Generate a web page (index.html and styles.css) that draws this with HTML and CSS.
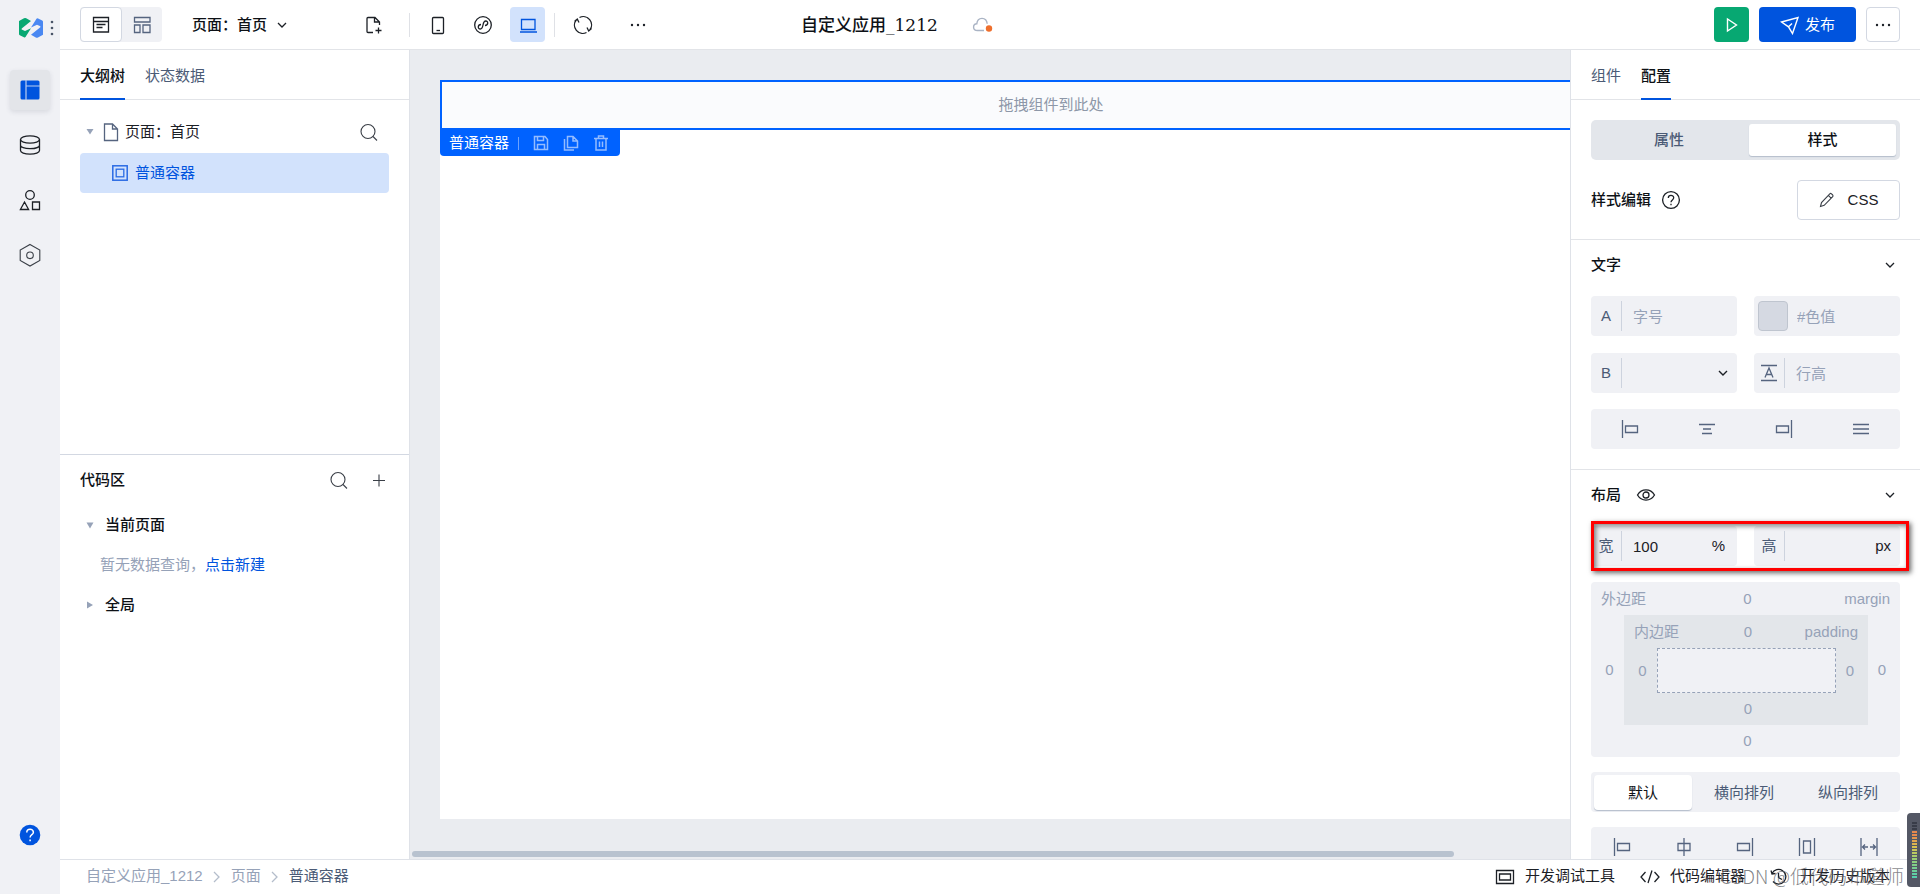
FILE: index.html
```html
<!DOCTYPE html>
<html lang="zh-CN">
<head>
<meta charset="utf-8">
<title>自定义应用_1212</title>
<link rel="stylesheet" href="styles.css">
</head>
<body>
<div class="app">
  <nav class="rail" aria-label="主导航">
    <div class="brand">
      <svg class="logo" width="24" height="20" viewBox="0 0 24 20"><path fill="#07a872" d="M0 3 5 .3q1.200-.5 2.200 0L12 3 3 10.200q-1 1 .2 1.600L6 13l6-2.800L6.500 19q-.6.800-1.600.200L.8 17.300Q0 17 0 16z"/><path fill="#4a88f2" d="M24 16.800 19 19.600q-1.200.5-2.200 0L12 16.800l9-7.200q1-1-.2-1.600L18 6.800 12 9.600 17.500.8q.6-.8 1.600-.2l4.100 2Q24 3 24 3.800z"/></svg>
      <svg width="4" height="18" viewBox="0 0 4 18" fill="#4a5568"><circle cx="2" cy="3" r="1.300"/><circle cx="2" cy="9" r="1.300"/><circle cx="2" cy="15" r="1.300"/></svg>
    </div>
    <button class="rail-item active" aria-label="页面">
      <svg width="20" height="20" viewBox="0 0 20 20"><rect x=".5" y=".5" width="19" height="19" rx="1.500" fill="#0054de"/><path d="M6 0v20M6 6h14" stroke="#b9cdf0" stroke-width="1.200"/></svg>
    </button>
    <button class="rail-item" aria-label="数据">
      <svg class="ic" width="22" height="20" viewBox="0 0 22 20"><ellipse cx="11" cy="4.500" rx="9.500" ry="3.700"/><path d="M1.500 4.500v11c0 2 4 3.700 9.500 3.700s9.500-1.700 9.500-3.700v-11M1.500 10.200c0 2 4 3.500 9.500 3.500s9.500-1.500 9.500-3.500"/></svg>
    </button>
    <button class="rail-item" aria-label="组件库">
      <svg class="ic" width="22" height="22" viewBox="0 0 22 22"><circle cx="11" cy="6" r="4.300"/><path d="M5.500 13 9.600 20.500H1.400zM13.500 13h7v7.500h-7z"/></svg>
    </button>
    <button class="rail-item" aria-label="设置">
      <svg class="ic thin" width="22" height="24" viewBox="0 0 22 24"><path d="M11 1.500 20.800 7v10.500L11 23 1.200 17.500V7z"/><circle cx="11" cy="12.300" r="3.300"/></svg>
    </button>
    <button class="rail-help" aria-label="帮助">
      <svg width="22" height="22" viewBox="0 0 22 22"><circle cx="11" cy="11" r="10.300" fill="#0054de"/><path d="M7.800 8.500c0-4.300 6.600-4 6.600-.3 0 2.600-3.300 2.400-3.300 5.300M11.100 15.500v1.700" fill="none" stroke="#fff" stroke-width="1.500"/></svg>
    </button>
  </nav>

  <div class="shell">
    <header class="topbar">
      <div class="view-toggle">
        <button class="on" aria-label="列表视图"><svg class="ic" width="18" height="18" viewBox="0 0 18 18"><path d="M1.500 1.500h15v14.500h-15zM1.500 5.500h15M4.500 8.500h9M4.500 11.500h6"/></svg></button>
        <button aria-label="布局视图"><svg class="ic slate" width="18" height="18" viewBox="0 0 18 18"><path d="M1.500 1.500h15.500v4.500h-15.500zM1.500 9h5.500v7.500h-5.500zM10 9h7v7.500h-7z"/></svg></button>
      </div>
      <button class="page-pick">页面：首页<svg class="ic" width="12" height="12" viewBox="0 0 12 12"><path d="m2 4 4 4 4-4"/></svg></button>
      <button class="tool new-page" aria-label="新建页面"><svg class="ic" width="20" height="20" viewBox="0 0 20 20"><path d="M9 17.500H4q-1 0-1-1v-13q0-1 1-1h7l4.500 4.500v3M10.500 2.500v4.500h5M14.500 12.500v6M11.500 15.500h6"/></svg></button>
      <span class="sep"></span>
      <div class="devices">
        <button class="tool" aria-label="手机"><svg class="ic" width="20" height="20" viewBox="0 0 20 20"><rect x="4.500" y="2.500" width="11" height="16" rx="1"/><path d="M8.500 15.500h3.500"/></svg></button>
        <button class="tool" aria-label="小程序"><svg class="ic" width="20" height="20" viewBox="0 0 20 20"><circle cx="10" cy="10" r="8.300"/><path d="M8 9.500C4.500 9.800 4.500 14 7.300 14c3.900 0 1.500-8 5.400-8 2.800 0 2.800 4.200-.7 4.500"/></svg></button>
        <button class="tool on" aria-label="电脑"><svg class="ic blue" width="20" height="20" viewBox="0 0 20 20"><path d="M3.500 4.500h13.500v10H3.500zM2 17h17"/></svg></button>
      </div>
      <span class="sep"></span>
      <button class="tool refresh" aria-label="刷新"><svg class="ic" width="20" height="20" viewBox="0 0 20 20"><path d="M6.500 2.500A8.300 8.300 0 0 1 16.800 15M13.500 17.500A8.300 8.300 0 0 1 3.200 5M1.500 6.500 4.300 4 6 7.500M18.500 13.500 15.700 16 14 12.500"/></svg></button>
      <button class="tool" aria-label="更多"><svg width="20" height="20" viewBox="0 0 20 20" fill="#1c2026"><circle cx="4" cy="10" r="1.200"/><circle cx="10" cy="10" r="1.200"/><circle cx="16" cy="10" r="1.200"/></svg></button>
      <h1 class="app-title">自定义应用_1212</h1>
      <svg width="22" height="18" viewBox="0 0 22 18"><path d="M12 14.500H5.500C.3 14.500.5 8 4.800 7.800 5.500.5 14.500.5 15.200 7.800" fill="none" stroke="#a9b3c4" stroke-width="1.400"/><circle cx="17" cy="12.500" r="3.200" fill="#ee6f2d"/></svg>
      <div class="actions">
        <button class="run" aria-label="预览"><svg width="14" height="16" viewBox="0 0 14 16"><path d="M2.500 2v12l9-6z" fill="none" stroke="#fff" stroke-width="1.400"/></svg></button>
        <button class="publish"><svg width="20" height="20" viewBox="0 0 20 20"><path d="M1.500 7 18 2.500 12.500 18.500 8.500 11.800zM8.500 11.800l3.500-3.300" fill="none" stroke="#fff" stroke-width="1.400"/></svg>发布</button>
        <button class="more" aria-label="更多操作"><svg width="20" height="20" viewBox="0 0 20 20" fill="#1c2026"><circle cx="4" cy="10" r="1.200"/><circle cx="10" cy="10" r="1.200"/><circle cx="16" cy="10" r="1.200"/></svg></button>
      </div>
    </header>

    <div class="work">
      <aside class="side">
        <section class="outline">
          <div class="tabs"><button class="tab on">大纲树</button><button class="tab">状态数据</button></div>
          <div class="tree">
            <div class="tree-row">
              <svg width="10" height="8" viewBox="0 0 10 8"><path d="M1.500 1h7L5 6.500z" fill="#96a2b8"/></svg>
              <svg class="ic slate doc" width="18" height="20" viewBox="0 0 18 20"><path d="M3 2h7.500L15.500 7v11.500H2.500V2zM10.500 2v5h5"/></svg>
              <span class="grow">页面：首页</span>
              <button class="bare" aria-label="搜索"><svg class="ic thin" width="20" height="20" viewBox="0 0 20 20"><circle cx="9" cy="9.500" r="7"/><path d="m14 14.500 4 4"/></svg></button>
            </div>
            <div class="tree-row picked">
              <svg width="16" height="16" viewBox="0 0 16 16"><rect x=".8" y=".8" width="14.400" height="14.400" fill="none" stroke="#2a6be4" stroke-width="1.500"/><rect x="4.200" y="4.200" width="7.600" height="7.600" fill="none" stroke="#2a6be4" stroke-width="1.300"/></svg>
              <span>普通容器</span>
            </div>
          </div>
        </section>
        <section class="code">
          <div class="code-head">
            <h2 class="grow">代码区</h2>
            <button class="bare" aria-label="搜索代码"><svg class="ic thin" width="20" height="20" viewBox="0 0 20 20"><circle cx="9" cy="9.500" r="7"/><path d="m14 14.500 4 4"/></svg></button>
            <button class="bare" aria-label="新建"><svg class="ic thin" width="20" height="20" viewBox="0 0 20 20"><path d="M10 4.500v12M4 10.500h12"/></svg></button>
          </div>
          <div class="code-row"><svg width="10" height="8" viewBox="0 0 10 8"><path d="M1.500 1.500h7L5 7.500z" fill="#96a2b8"/></svg>当前页面</div>
          <div class="code-row empty">暂无数据查询，<a href="#new">点击新建</a></div>
          <div class="code-row"><svg width="10" height="10" viewBox="0 0 10 10"><path d="M2 1.500v7L8 5z" fill="#96a2b8"/></svg>全局</div>
        </section>
      </aside>

      <main class="stage">
        <div class="page">
          <div class="container">拖拽组件到此处</div>
          <div class="node-bar">
            <span>普通容器</span>
            <i class="node-sep"></i>
            <button aria-label="保存"><svg width="16" height="16" viewBox="0 0 16 16"><path d="M1.500 1.500h10.500L14.500 4.500v10h-13zM4.500 1.500v4h6v-4M4.500 14.500v-5h7v5"/></svg></button>
            <button aria-label="复制"><svg width="16" height="16" viewBox="0 0 16 16"><path d="M4.500 1.500h5.500L14.500 6v6.500h-10zM10 1.500V6h4.500M1.500 4v11h9.500"/></svg></button>
            <button aria-label="删除"><svg width="16" height="16" viewBox="0 0 16 16"><path d="M1 3.500h14M5.500 3.500v-2.500h5v2.500M3 3.500v11.500h10V3.500M6.500 6.500v5.500M9.500 6.500v5.500"/></svg></button>
          </div>
        </div>
        <div class="scroll"><div class="thumb"></div></div>
      </main>

      <aside class="props">
        <div class="tabs"><button class="tab">组件</button><button class="tab on">配置</button></div>
        <section class="group first">
          <div class="switch"><button>属性</button><button class="on">样式</button></div>
          <div class="style-row">
            <h2>样式编辑</h2>
            <svg class="ic" width="20" height="20" viewBox="0 0 20 20"><circle cx="10" cy="10" r="8.400"/><path d="M7.300 8c0-3.500 5.400-3.400 5.400-.2 0 2.200-2.700 2-2.700 4.400M10 13.800v1.500"/></svg>
            <button class="css-btn"><svg class="ic thin" width="16" height="16" viewBox="0 0 16 16"><path d="m1.500 14.500 1-4 8.300-8.700q.8-.8 1.700 0l1.200 1.200q.8.900 0 1.700L5.200 13.300zM9.300 3.300l3 3"/></svg>CSS</button>
          </div>
        </section>

        <section class="group">
          <div class="group-head"><h2>文字</h2><button class="bare fold" aria-label="收起文字"><svg class="ic" width="12" height="12" viewBox="0 0 12 12"><path d="m2 4 4 4 4-4"/></svg></button></div>
          <div class="fields">
            <div class="field"><label for="fs">A</label><input id="fs" placeholder="字号"></div>
            <div class="field color"><button class="swatch" aria-label="选择颜色"></button><input aria-label="色值" placeholder="#色值"></div>
            <div class="field"><label for="fw">B</label><select id="fw"><option></option><option>700</option></select></div>
            <div class="field"><label for="lh" aria-label="行高"><svg class="ic slate" width="16" height="18" viewBox="0 0 16 18"><path d="M0 1.500h16M0 16.500h16M4 13.500 8 4l4 9.500M5.300 10.500h5.400"/></svg></label><input id="lh" placeholder="行高"></div>
          </div>
          <div class="icons">
            <button aria-label="左对齐"><svg class="ic slate" width="18" height="18" viewBox="0 0 18 18"><path d="M1.500 0v18M4.500 6h12v6.500h-12z"/></svg></button>
            <button aria-label="居中"><svg class="ic slate" width="18" height="18" viewBox="0 0 18 18"><path d="M1 4.500h16M5 9h8M4 13.500h10"/></svg></button>
            <button aria-label="右对齐"><svg class="ic slate" width="18" height="18" viewBox="0 0 18 18"><path d="M16.500 0v18M1.500 6h12v6.500h-12z"/></svg></button>
            <button aria-label="两端对齐"><svg class="ic slate" width="18" height="18" viewBox="0 0 18 18"><path d="M1 4.500h16M1 9h16M1 13.500h16"/></svg></button>
          </div>
        </section>

        <section class="group last">
          <div class="group-head"><h2>布局</h2><svg class="ic" width="20" height="14" viewBox="0 0 20 14"><path d="M1.500 7C5.500.2 14.500.2 18.500 7 14.500 13.800 5.500 13.800 1.500 7z"/><circle cx="10" cy="7" r="3"/></svg><button class="bare fold" aria-label="收起布局"><svg class="ic" width="12" height="12" viewBox="0 0 12 12"><path d="m2 4 4 4 4-4"/></svg></button></div>
          <div class="fields size">
            <div class="field"><label for="w">宽</label><input id="w" value="100"><span class="unit pct">%</span></div>
            <div class="field"><label for="h">高</label><input id="h"><span class="unit">px</span></div>
            <div class="mark"></div>
          </div>
          <div class="box outer">
            <div class="edge"><span>外边距</span><input aria-label="上外边距" value="0"><span class="end">margin</span></div>
            <input class="l" aria-label="左外边距" value="0">
            <div class="box inner">
              <div class="edge"><span>内边距</span><input aria-label="上内边距" value="0"><span class="end">padding</span></div>
              <input class="l" aria-label="左内边距" value="0">
              <div class="core"></div>
              <input class="r" aria-label="右内边距" value="0">
              <input class="b" aria-label="下内边距" value="0">
            </div>
            <input class="r" aria-label="右外边距" value="0">
            <input class="b" aria-label="下外边距" value="0">
          </div>
          <div class="flow"><button class="on">默认</button><button>横向排列</button><button>纵向排列</button></div>
          <div class="icons five">
            <button aria-label="起点"><svg class="ic slate" width="18" height="18" viewBox="0 0 18 18"><path d="M1.500 0v18M4.500 5.500h12v7h-12z"/></svg></button>
            <button aria-label="中间"><svg class="ic slate" width="18" height="18" viewBox="0 0 18 18"><path d="M9 0v18M3 5.500h12v7H3z"/></svg></button>
            <button aria-label="终点"><svg class="ic slate" width="18" height="18" viewBox="0 0 18 18"><path d="M16.500 0v18M1.500 5.500h12v7h-12z"/></svg></button>
            <button aria-label="环绕"><svg class="ic slate" width="18" height="18" viewBox="0 0 18 18"><path d="M1.500 0v18M16.500 0v18M5.500 3h7v12h-7z"/></svg></button>
            <button aria-label="两端"><svg class="ic slate" width="18" height="18" viewBox="0 0 18 18"><path d="M1 0v18M17 0v18M2.500 9H8M5 6.500 2.500 9 5 11.500M15.500 9H10M13 6.500 15.500 9 13 11.500"/></svg></button>
          </div>
        </section>
      </aside>
    </div>

    <footer class="foot">
      <nav class="crumbs" aria-label="路径">
        <a href="#app">自定义应用_1212</a>
        <svg width="10" height="14" viewBox="0 0 10 14"><path d="m2 3 5 5-5 5" fill="none" stroke="#b4bdcb" stroke-width="1.300"/></svg>
        <a href="#page">页面</a>
        <svg width="10" height="14" viewBox="0 0 10 14"><path d="m2 3 5 5-5 5" fill="none" stroke="#b4bdcb" stroke-width="1.300"/></svg>
        <a class="here" href="#node">普通容器</a>
      </nav>
      <div class="foot-tools">
        <button><svg class="ic" width="20" height="20" viewBox="0 0 20 20"><path d="M1.500 4.500h17v13h-17zM4.500 8h11v6h-11z"/></svg>开发调试工具</button>
        <button><svg class="ic" width="20" height="20" viewBox="0 0 20 20"><path d="M5.500 6 1 11l4.500 5M14.500 6 19 11l-4.500 5M12 4.500 8 17"/></svg>代码编辑器</button>
        <button><svg class="ic" width="20" height="20" viewBox="0 0 20 20"><path d="M2 7.500A7.300 7.300 0 1 1 3 15.500M1 4.500l1 3.500 3.500-.5M8.500 7v4.500l3.500 2"/></svg>开发历史版本</button>
      </div>
    </footer>
  </div>

  <div class="stamp">CSDN @低代码布道师</div>
  <div class="meter"><div class="bars"></div></div>
</div>
</body>
</html>
```

FILE: styles.css
```css
* { box-sizing: border-box; }

body {
  margin: 0;
  color: #1c2026;
  background: #fff;
  font: 15px/20px "Liberation Sans", "Noto Sans CJK SC", sans-serif;
}

button, input, select {
  font: inherit;
  color: inherit;
  background: none;
  border: 0;
  padding: 0;
  margin: 0;
  outline: 0;
  min-width: 0;
}

button { display: flex; align-items: center; justify-content: center; }
h1, h2 { margin: 0; font: inherit; font-weight: 500; color: #0d1116; }
a { color: #0054de; text-decoration: none; }
svg { display: block; flex: none; }
.ic { fill: none; stroke: #1c2026; stroke-width: 1.3; }
.thin { stroke-width: 1.1; stroke: #3a3f47; }
.slate { stroke: #55647f; }
.blue { stroke: #0054de; }
.grow { flex: 1; }

.app { position: relative; display: flex; height: 100vh; overflow: hidden; }

/* Left rail */
.rail {
  width: 60px;
  flex: none;
  display: flex;
  flex-direction: column;
  align-items: center;
  gap: 15px;
  background: #f0f1f5;
  padding-bottom: 48px;
}
.brand { height: 55px; width: 60px; display: flex; align-items: center; gap: 7px; padding-left: 19px; }
.rail-item { width: 40px; height: 40px; border-radius: 4px; }
.rail-item.active { background: #e3e5e9; box-shadow: 0 2px 5px rgba(40, 50, 70, .12); }
.rail-help { margin-top: auto; }

/* Header */
.shell { flex: 1; min-width: 0; display: flex; flex-direction: column; }
.topbar {
  height: 50px;
  flex: none;
  display: flex;
  align-items: center;
  padding: 0 20px;
  border-bottom: 1px solid #e2e4e8;
}
.view-toggle { display: flex; background: #f0f1f5; border-radius: 4px; }
.view-toggle button { width: 40px; height: 35px; }
.view-toggle .on { width: 42px; background: #fff; border: 1px solid #d3d8e2; border-radius: 4px; }
.page-pick { margin-left: 30px; gap: 9px; font-weight: 500; color: #0d1116; }
.tool { width: 35px; height: 35px; border-radius: 4px; }
.tool.on { background: #d2e2fc; }
.new-page { margin-left: 68px; margin-right: 18px; }
.sep { width: 1px; height: 24px; background: #dfe1e6; }
.devices { display: flex; gap: 10px; padding: 0 9px 0 10px; }
.refresh { margin: 0 20px 0 10px; }
.app-title {
  margin: 0 34px 0 146px;
  font: 500 17px/24px "DejaVu Serif", "Noto Sans CJK SC", sans-serif;
}
.actions { display: flex; gap: 10px; margin-left: auto; color: #fff; }
.actions button { height: 35px; border-radius: 4px; }
.run { width: 35px; background: #07a872; }
.publish { width: 97px; gap: 5px; background: #0054de; }
.more { width: 34px; border: 1px solid #d3d8e2; }

/* Tabs shared by both side panels */
.tabs { height: 50px; flex: none; display: flex; gap: 20px; padding: 0 20px; border-bottom: 1px solid #e2e4e8; }
.tab { height: 50px; color: #4b5b76; border-bottom: 2px solid transparent; padding-top: 3px; }
.tab.on { color: #0d1116; font-weight: 500; border-color: #0054de; }

.work { flex: 1; min-height: 0; display: flex; }

/* Outline and code panels */
.side { width: 350px; flex: none; display: flex; flex-direction: column; border-right: 1px solid #dfe2e8; }
.outline, .code { flex: 1; min-height: 0; }
.tree { display: flex; flex-direction: column; gap: 1px; padding: 12px 20px; }
.tree-row { height: 40px; display: flex; align-items: center; padding: 0 10px 0 5px; border-radius: 4px; }
.tree-row .doc { margin: 0 5px 0 7px; }
.picked { background: #d2e2fc; color: #0054de; padding-left: 32px; gap: 7px; }
.code { border-top: 1px solid #d3d8e2; }
.code-head { height: 50px; display: flex; align-items: center; gap: 20px; padding: 0 20px; }
.code-row { height: 40px; display: flex; align-items: center; gap: 10px; padding: 0 25px; font-weight: 500; color: #0d1116; }
.code-row.empty { padding-left: 40px; gap: 0; font-weight: 400; color: #96a2b8; }

/* Canvas */
.stage {
  flex: 1;
  min-width: 0;
  overflow: hidden;
  display: flex;
  flex-direction: column;
  background: #eaecf0;
  padding: 30px 0 2px 30px;
}
.page { flex: 1; width: calc(100% + 92px); background: #fff; }
.container {
  height: 50px;
  display: flex;
  align-items: center;
  justify-content: center;
  border: 2px solid #0062ff;
  background: #fafbfd;
  color: #8d97a8;
}
.node-bar {
  width: 180px;
  height: 26px;
  display: flex;
  align-items: center;
  padding-left: 9px;
  background: #0062ff;
  color: #fff;
  border-radius: 0 0 4px 4px;
}
.node-sep { width: 1px; height: 13px; margin-left: 9px; background: #6ba3ff; }
.node-bar button { margin-left: 14px; }
.node-bar svg { fill: none; stroke: #94bcff; stroke-width: 1.5; }
.scroll { margin: 32px 0 0 -28px; }
.thumb { width: 90%; height: 6px; border-radius: 3px; background: #b8c2cf; }

/* Property panel */
.props { width: 350px; flex: none; overflow: hidden; border-left: 1px solid #dfe2e8; }
.group { padding: 0 20px 20px; border-bottom: 1px solid #e2e4e8; }
.first { padding: 20px 20px 19px; }
.switch { display: flex; height: 40px; padding: 4px; border-radius: 5px; background: #e3e6eb; color: #4b5b76; font-weight: 500; }
.switch button { flex: 1; border-radius: 3px; padding-right: 6px; }
.switch .on { flex: 0 0 147px; padding: 0; background: #fff; color: #0d1116; box-shadow: 0 1px 1px #b4bdcb; }
.style-row { display: flex; align-items: center; gap: 10px; margin-top: 20px; }
.css-btn { margin-left: auto; width: 103px; height: 40px; gap: 13px; border: 1px solid #d3d8e2; border-radius: 4px; }
.group-head { height: 50px; margin-bottom: 6px; display: flex; align-items: center; gap: 15px; }
.fold { margin-left: auto; padding: 4px; }

.fields { position: relative; display: grid; grid-template-columns: 1fr 1fr; gap: 17px; }
.field { height: 40px; display: flex; align-items: center; border-radius: 4px; background: #f0f1f5; overflow: hidden; }
.field label {
  width: 31px;
  height: 30px;
  flex: none;
  display: flex;
  align-items: center;
  justify-content: center;
  border-right: 1px solid #cdd3de;
  color: #4b5b76;
}
.field input, .field select { flex: 1; width: 0; height: 40px; padding-left: 11px; }
.field input::placeholder { color: #96a2b8; opacity: 1; }
.field select {
  appearance: none;
  margin-right: 8px;
  background: url("data:image/svg+xml,%3Csvg xmlns='http://www.w3.org/2000/svg' width='12' height='12'%3E%3Cpath d='m2 4 4 4 4-4' fill='none' stroke='%231c2026' stroke-width='1.4'/%3E%3C/svg%3E") no-repeat right center;
}
.swatch { width: 30px; height: 30px; flex: none; margin-left: 4px; border: 1px solid #bfc5cf; border-radius: 4px; background: #d5d9e2; }
.color input { padding-left: 9px; }
.unit { padding-right: 9px; }
.pct { padding-right: 12px; }
.mark {
  position: absolute;
  inset: -5px -9px -5px 0;
  border: 3px solid #f00;
  box-shadow: 2px 2px 5px rgba(0, 0, 0, .6), inset 2px 2px 5px rgba(0, 0, 0, .5);
  pointer-events: none;
}

.icons { height: 40px; margin-top: 16px; display: grid; grid-template-columns: repeat(4, 1fr); border-radius: 4px; background: #f0f1f5; }
.icons.five { grid-template-columns: repeat(5, 1fr); margin-top: 15px; }

.box { display: grid; grid-template-columns: 33px 1fr 32px; grid-template-rows: 33px 1fr 32px; color: #96a2b8; }
.box input { width: 100%; padding-left: 4px; text-align: center; }
.box .r { padding: 0 4px 0 0; }
.outer { height: 175px; margin-top: 16px; border-radius: 4px; background: #f0f1f5; }
.inner { background: #e3e6ea; }
.edge { grid-column: 1 / 4; display: grid; grid-template-columns: 1fr 20px 1fr; align-items: center; padding: 0 10px; }
.end { text-align: right; }
.box .b { grid-column: 1 / 4; }
.core { border: 1px dashed #96a2b8; background: #f0f1f5; }

.flow { height: 40px; margin-top: 15px; padding: 3px 0 2px 3px; display: flex; border-radius: 4px; background: #f0f1f5; color: #4b5b76; }
.flow button { flex: 1; height: 35px; border-radius: 4px; }
.flow .on { flex: 0 0 98px; background: #fff; color: #0d1116; box-shadow: 0 1px 1px #b4bdcb; }

/* Footer */
.foot { height: 35px; flex: none; display: flex; align-items: center; justify-content: space-between; padding: 0 30px 2px 26px; border-top: 1px solid #dfe2e8; }
.crumbs { display: flex; align-items: center; gap: 9px; }
.crumbs a { color: #96a2b8; }
.crumbs .here { color: #4b5b76; }
.foot-tools { display: flex; gap: 25px; }
.foot-tools button { gap: 10px; }

/* Floating overlays */
.stamp { position: absolute; right: 16px; bottom: 5px; font: 300 19px/26px "Noto Sans CJK SC", sans-serif; color: rgba(90, 92, 98, .75); white-space: nowrap; }
.meter { position: absolute; right: 0; bottom: 7px; width: 13px; height: 74px; padding: 8px 3px 8px 5px; border-radius: 4px 0 0 4px; background: #545865; }
.bars {
  height: 58px;
  background:
    repeating-linear-gradient(#545865 0 1px, transparent 1px 3px),
    linear-gradient(#383c48 0 10px, #e8894e 10px 14px, #d9c24f 26px, #8fd07a 40px, #4fd0b4 58px);
}
```
